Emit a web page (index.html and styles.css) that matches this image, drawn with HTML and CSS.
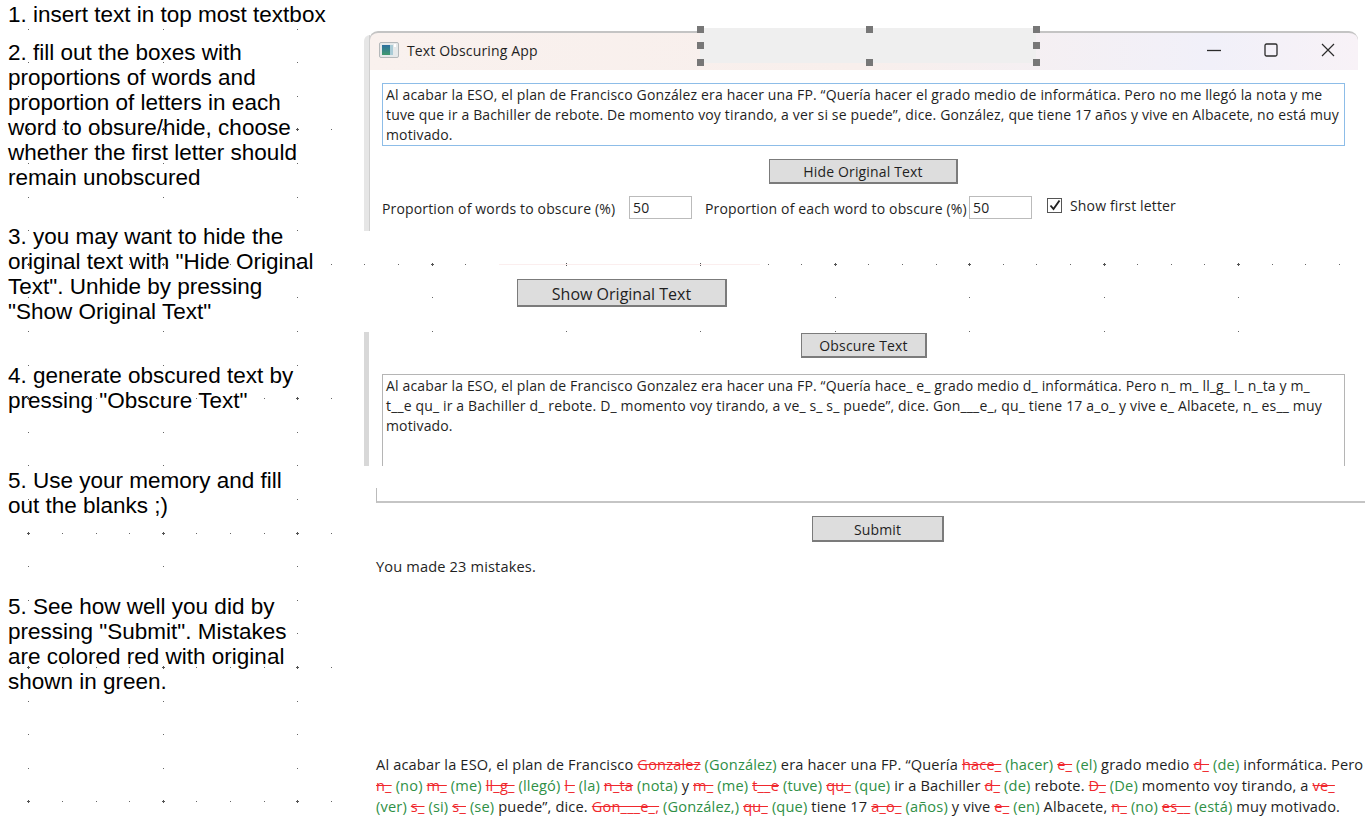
FILE: index.html
```html
<!DOCTYPE html>
<html lang="en">
<head>
  <meta charset="UTF-8" />
  <title>Text Obscuring App instructions</title>
  <link rel="stylesheet" href="styles.css">
</head>
<body>
  <svg id="grid" class="grid" width="1365" height="821" shape-rendering="crispEdges"></svg>

  <div class="slide">
    <div class="notes">
      <p class="note note-1">1. insert text in top most textbox</p>
      <p class="note note-2">2. fill out the boxes with proportions of words and proportion of letters in each word to obsure/hide, choose whether the first letter should remain unobscured</p>
      <p class="note note-3">3. you may want to hide the original text with "Hide Original Text". Unhide by pressing "Show Original Text"</p>
      <p class="note note-4">4. generate obscured text by pressing "Obscure Text"</p>
      <p class="note note-5">5. Use your memory and fill out the blanks ;)</p>
      <p class="note note-6">5. See how well you did by pressing "Submit". Mistakes are colored red with original shown in green.</p>
    </div>

    <div class="shots">
      <div class="shot shot-top">
        <div class="titlebar">
          <svg class="app-icon" width="20" height="16" viewBox="0 0 20 16">
            <defs>
              <linearGradient id="iconFill" x1="0" y1="0" x2="0" y2="1">
                <stop offset="0" stop-color="#2d6f9f" />
                <stop offset="1" stop-color="#3f9a6e" />
              </linearGradient>
            </defs>
            <rect x="0.5" y="0.5" width="19" height="15" rx="1.5" fill="#e6e9ea" stroke="#b4b8ba" />
            <rect x="3" y="3" width="8" height="10" fill="url(#iconFill)" />
            <rect x="11" y="3" width="3" height="10" fill="#a9cbd6" />
            <rect x="15" y="2" width="2" height="3" fill="#fff" />
          </svg>
          <span class="app-title">Text Obscuring App</span>
          <div class="win-controls">
            <svg width="14" height="14" viewBox="0 0 14 14"><path d="M0 7.5H14" stroke="#2b2b2b" stroke-width="1.3" fill="none" /></svg>
            <svg width="14" height="14" viewBox="0 0 14 14"><rect x="1" y="1" width="12" height="12" rx="1.5" stroke="#2b2b2b" stroke-width="1.3" fill="none" /></svg>
            <svg width="14" height="14" viewBox="0 0 14 14"><path d="M1 1L13 13M13 1L1 13" stroke="#2b2b2b" stroke-width="1.2" fill="none" /></svg>
          </div>
        </div>
        <div class="redaction"></div>
        <span class="handle h-tl"></span>
        <span class="handle h-tm"></span>
        <span class="handle h-tr"></span>
        <span class="handle h-ml"></span>
        <span class="handle h-mr"></span>
        <span class="handle h-bl"></span>
        <span class="handle h-bm"></span>
        <span class="handle h-br"></span>

        <div class="textbox textbox-focus">Al acabar la ESO, el plan de Francisco González era hacer una FP. “Quería hacer el grado medio de informática. Pero no me llegó la nota y me tuve que ir a Bachiller de rebote. De momento voy tirando, a ver si se puede”, dice. González, que tiene 17 años y vive en Albacete, no está muy motivado.</div>

        <div class="btn-row btn-row-hide"><button class="btn btn-hide">Hide Original Text</button></div>

        <div class="options">
          <span class="opt-words">Proportion of words to obscure (%)</span>
          <span class="num-input">50</span>
          <span class="opt-each">Proportion of each word to obscure (%)</span>
          <span class="num-input">50</span>
          <span class="check">
            <svg width="12" height="12" viewBox="0 0 12 12"><path d="M1.5 6.5L4.5 10L10.5 1.5" stroke="#222" stroke-width="1.9" fill="none" /></svg>
          </span>
          <span class="check-label">Show first letter</span>
        </div>
      </div>

      <div class="shot-edge"></div>
      <div class="show-row"><button class="btn btn-show">Show Original Text</button></div>

      <div class="shot shot-mid">
        <div class="btn-row btn-row-obscure"><button class="btn btn-obscure">Obscure Text</button></div>
        <div class="textbox textbox-open">Al acabar la ESO, el plan de Francisco Gonzalez era hacer una FP. “Quería hace_ e_ grado medio d_ informática. Pero n_ m_ ll_g_ l_ n_ta y m_ t__e qu_ ir a Bachiller d_ rebote. D_ momento voy tirando, a ve_ s_ s_ puede”, dice. Gon___e_, qu_ tiene 17 a_o_ y vive e_ Albacete, n_ es__ muy motivado.</div>
      </div>

      <div class="shot shot-bottom">
        <div class="box-end"></div>
        <div class="btn-row btn-row-submit"><button class="btn btn-submit">Submit</button></div>
        <p class="score">You made 23 mistakes.</p>
        <p class="result">Al acabar la ESO, el plan de Francisco <s>Gonzalez</s> <em>(González)</em> era hacer una FP. “Quería <s>hace_</s> <em>(hacer)</em> <s>e_</s> <em>(el)</em> grado medio <s>d_</s> <em>(de)</em> informática. Pero <s>n_</s> <em>(no)</em> <s>m_</s> <em>(me)</em> <s>ll_g_</s> <em>(llegó)</em> <s>l_</s> <em>(la)</em> <s>n_ta</s> <em>(nota)</em> y <s>m_</s> <em>(me)</em> <s>t__e</s> <em>(tuve)</em> <s>qu_</s> <em>(que)</em> ir a Bachiller <s>d_</s> <em>(de)</em> rebote. <s>D_</s> <em>(De)</em> momento voy tirando, a <s>ve_</s> <em>(ver)</em> <s>s_</s> <em>(si)</em> <s>s_</s> <em>(se)</em> puede”, dice. <s>Gon___e_,</s> <em>(González,)</em> <s>qu_</s> <em>(que)</em> tiene 17 <s>a_o_</s> <em>(años)</em> y vive <s>e_</s> <em>(en)</em> Albacete, <s>n_</s> <em>(no)</em> <s>es__</s> <em>(está)</em> muy motivado.</p>
      </div>
    </div>
  </div>

  <script src="grid.js"></script>
</body>
</html>
```

FILE: styles.css
```css
* {
  box-sizing: border-box;
}

body {
  margin: 0;
  width: 1365px;
  height: 821px;
  position: relative;
  overflow: hidden;
  background: #fff;
  color: #1f1f1f;
  font-family: "Open Sans", sans-serif;
  font-size: 14px;
  letter-spacing: 0.15px;
}

.grid {
  position: absolute;
  left: 0;
  top: 0;
}

.slide {
  position: relative;
  display: flex;
  height: 821px;
}

/* instructions on the left */
.notes {
  width: 364px;
  flex: none;
  padding-left: 8px;
  font-family: "Liberation Sans", sans-serif;
  font-size: 22.5px;
  line-height: 25px;
  letter-spacing: 0;
  color: #000;
}

.note {
  margin: 0;
  width: 310px;
}

.note-1 { margin-top: 2px; white-space: nowrap; }
.note-2 { margin-top: 13px; }
.note-3 { margin-top: 34px; }
.note-4 { margin-top: 39px; }
.note-5 { margin-top: 55px; }
.note-6 { margin-top: 76px; }

/* pasted screenshots */
.shots {
  flex: 1;
  min-width: 0;
  padding-top: 28px;
}

.shot {
  background: #fff;
  position: relative;
}

.shot-top {
  width: 994px;
  height: 203px;
  padding-top: 3px;
  border-left: 5px solid #fff;
}

.shot-top::before {
  content: "";
  position: absolute;
  left: -5px;
  top: 7px;
  bottom: 0;
  width: 5px;
  border-top-left-radius: 6px;
  border-right: 1px solid #cfcfcf;
  background: #e6e6e6;
}

.titlebar {
  height: 39px;
  display: flex;
  align-items: center;
  padding: 2px 0 5px 9px;
  border-top: 2px solid #c4c4c4;
  border-left: 1px solid #ccc;
  border-top-left-radius: 9px;
  border-top-right-radius: 9px;
  background: linear-gradient(to right, #f9f1ee, #f8efec 50%, #f1f0f9 85%, #f8f2f7);
}

.app-icon {
  margin-right: 8px;
}

.app-title {
  font-size: 14px;
}

.win-controls {
  margin-left: auto;
  margin-right: 23px;
  display: flex;
  gap: 43px;
}

.redaction {
  position: absolute;
  left: 331px;
  top: 0;
  width: 336px;
  height: 35px;
  background: #efefef;
}

.handle {
  position: absolute;
  width: 7px;
  height: 7px;
  background: #777;
}

.h-tl { left: 328px; top: -2px; }
.h-tm { left: 497px; top: -2px; }
.h-tr { left: 664px; top: -2px; }
.h-ml { left: 328px; top: 14px; }
.h-mr { left: 664px; top: 14px; }
.h-bl { left: 328px; top: 31px; }
.h-bm { left: 497px; top: 31px; }
.h-br { left: 664px; top: 31px; }

.textbox {
  margin-left: 13px;
  width: 963px;
  padding: 1px 0 1px 3px;
  line-height: 20px;
  background: #fff;
}

.textbox-focus {
  margin-top: 13px;
  height: 63px;
  border: 1px solid #8dbde8;
}

.textbox-open {
  margin-top: 16px;
  height: 92px;
  padding-right: 15px;
  border: 1px solid #b5b5b5;
  border-bottom: none;
}

.btn-row {
  display: flex;
}

.btn {
  font: inherit;
  letter-spacing: inherit;
  color: #1f1f1f;
  padding: 1px 0 0;
  background: #ddd;
  border: 2px solid #7b7b7b;
  border-width: 1px 2px 2px 1px;
}

.btn-row-hide { margin-top: 13px; padding-left: 400px; }
.btn-hide { width: 189px; height: 25px; }

.options {
  margin-top: 12px;
  padding-left: 13px;
  display: flex;
  align-items: center;
  height: 23px;
}

.opt-words { width: 247px; }
.opt-each { margin-left: 13px; width: 264px; white-space: nowrap; }

.opt-words, .opt-each {
  padding-top: 1px;
}

.num-input {
  width: 63px;
  height: 23px;
  line-height: 21px;
  padding-left: 3px;
  border: 1px solid #bbb;
}

.check {
  margin-left: 15px;
  margin-top: -5px;
  width: 15px;
  height: 15px;
  border: 1px solid #555;
  display: flex;
  align-items: center;
  justify-content: center;
}

.check-label {
  margin-left: 8px;
  margin-top: -5px;
}

.shot-edge {
  margin: 33px 0 0 135px;
  width: 261px;
  height: 1px;
  background: #fbeeee;
}

.show-row {
  padding-left: 153px;
  margin-top: 14px;
  height: 28px;
  display: flex;
}

.btn-show {
  width: 210px;
  height: 28px;
  padding-top: 2px;
  font-size: 16px;
  letter-spacing: 0;
}

.shot-mid {
  margin-top: 25px;
  width: 994px;
  height: 134px;
  border-left: 5px solid #d8d8d8;
  padding-top: 1px;
}

.btn-row-obscure { padding-left: 432px; }
.btn-obscure { width: 126px; height: 25px; }

.shot-bottom {
  height: 355px;
  padding-top: 22px;
  padding-left: 12px;
}

.box-end {
  height: 15px;
  border-left: 1px solid #bbb;
  border-bottom: 2px solid #c5c5c5;
}

.btn-row-submit { margin-top: 13px; padding-left: 436px; }
.btn-submit { width: 132px; height: 26px; }

.score {
  margin: 14px 0 0;
  line-height: 20px;
  font-size: 14.6px;
}

.result {
  margin: 178px 0 0;
  width: 992px;
  font-size: 14.6px;
  letter-spacing: 0.16px;
  line-height: 21px;
}

.result s {
  color: #f0282d;
  text-decoration-color: #f0282d;
}

.result em {
  font-style: normal;
  color: #2f8f46;
}
```

FILE: grid.js
```js
// slide editor grid: dots every 33.6px, a small cross where major lines meet
const grid = document.getElementById('grid');
const step = 33.6;

function addRect(x, y, w, h, color) {
  const r = document.createElementNS('http://www.w3.org/2000/svg', 'rect');
  r.setAttribute('x', x);
  r.setAttribute('y', y);
  r.setAttribute('width', w);
  r.setAttribute('height', h);
  r.setAttribute('fill', color);
  grid.appendChild(r);
}

for (let row = 0; row < 24; row++) {
  for (let col = 0; col < 40; col++) {
    const majorRow = (row + 1) % 4 === 0;
    const majorCol = col % 4 === 0;
    if (!majorRow && !majorCol) continue;
    const x = Math.round(28.3 + col * step);
    const y = Math.round(28.5 + row * step);
    if (majorRow && majorCol) {
      addRect(x - 1, y, 3, 1, '#555');
      addRect(x, y - 1, 1, 3, '#555');
    } else {
      addRect(x, y, 1, 1, '#666');
    }
  }
}
```
